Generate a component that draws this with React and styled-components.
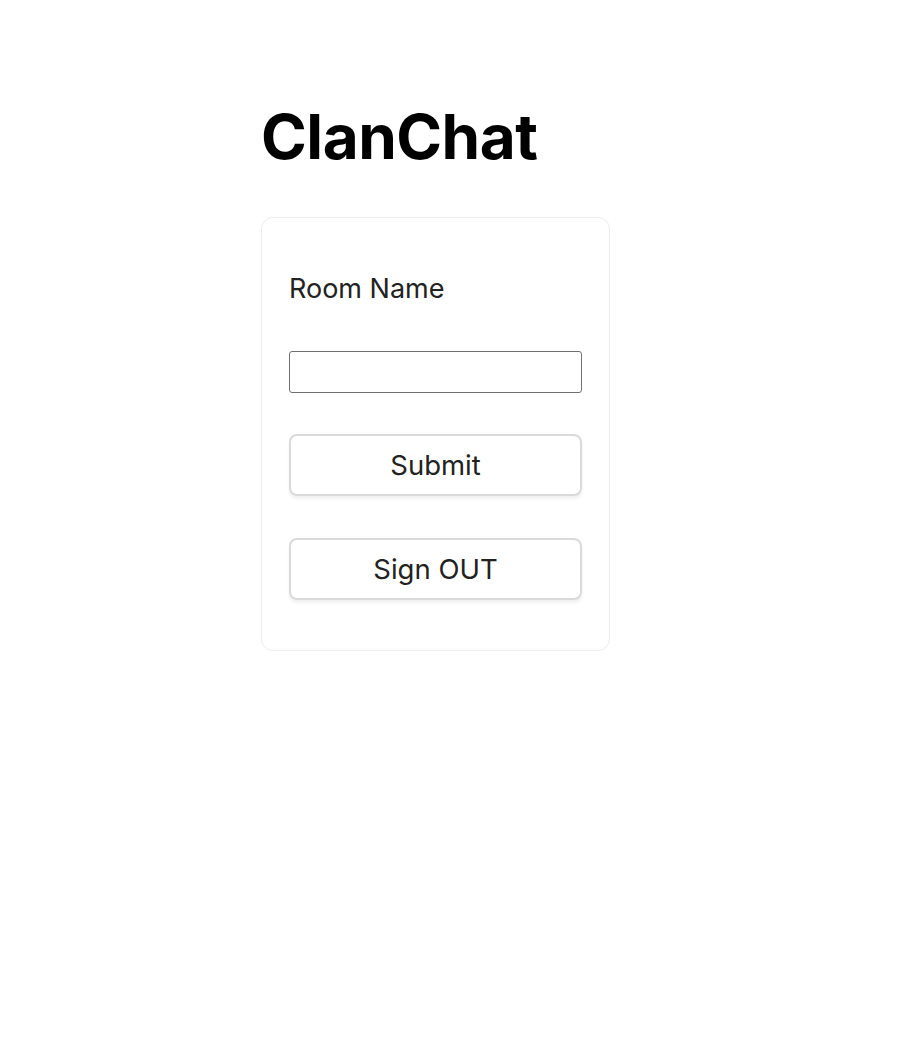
import React, { useState } from 'react'
import styled, { createGlobalStyle } from 'styled-components'

const GlobalStyle = createGlobalStyle`
  body {
    margin: 0;
    background: #fff;
    font-family: Inter, "Noto Sans", sans-serif;
  }
`

function App() {
  const [room, setRoom] = useState('')

  return (
    <Page>
      <GlobalStyle />
      <Title>ClanChat</Title>
      <Card>
        <Label htmlFor="room">Room Name</Label>
        <Input id="room" value={room} onChange={(e) => setRoom(e.target.value)} />
        <Button>Submit</Button>
        <Button>Sign OUT</Button>
      </Card>
    </Page>
  )
}

export default App

const Page = styled.div`
  padding-top: 101px;
  padding-left: 261px;
`

const Title = styled.h1`
  margin: 0 0 44px 0;
  font-family: Inter, "Noto Sans", sans-serif;
  font-size: 62px;
  font-weight: 700;
  line-height: 72px;
  color: #000;
  letter-spacing: -0.5px;
`

const Card = styled.div`
  box-sizing: border-box;
  width: 349px;
  padding: 55px 27px 50px 27px;
  border: 1.5px solid #ececec;
  border-radius: 12px;
  display: flex;
  flex-direction: column;
`

const Label = styled.label`
  font-size: 27px;
  line-height: 32px;
  color: #222;
  margin-bottom: 46px;
`

const Input = styled.input`
  box-sizing: border-box;
  width: 100%;
  height: 42px;
  border: 1.5px solid #707070;
  border-radius: 3px;
  font-size: 20px;
  padding: 0 8px;
  margin-bottom: 41px;
  outline: none;
`

const Button = styled.button`
  box-sizing: border-box;
  width: 100%;
  height: 62px;
  border: 2px solid #dadada;
  border-radius: 8px;
  background: #fff;
  box-shadow: 0 3px 3px rgba(0, 0, 0, 0.06);
  font-family: Inter, "Noto Sans", sans-serif;
  font-size: 27.5px;
  color: #222;
  cursor: pointer;

  & + & {
    margin-top: 42px;
  }
`
